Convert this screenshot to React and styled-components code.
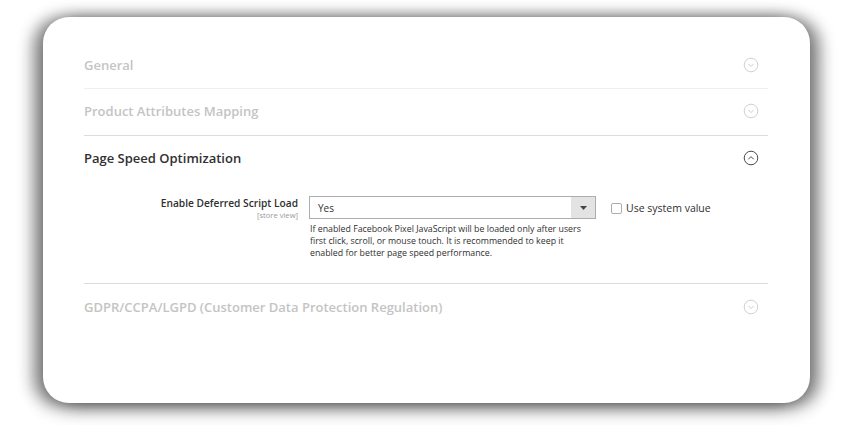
import React from "react";
import styled, { createGlobalStyle } from "styled-components";

const GlobalStyle = createGlobalStyle`
  html, body {
    margin: 0;
    padding: 0;
    background: #ffffff;
    font-family: "Open Sans", "Noto Sans", sans-serif;
  }
`;

const Page = styled.div`
  width: 853px;
  height: 425px;
  padding: 17px 43px 0 43px;
  box-sizing: border-box;
  overflow: hidden;
`;

const Card = styled.div`
  width: 767px;
  height: 386px;
  box-sizing: border-box;
  background: #ffffff;
  border-radius: 26px;
  padding: 25px 42px 0 41px;
  box-shadow: -10px 2px 16px rgba(0, 0, 0, 0.42), 10px 2px 16px rgba(0, 0, 0, 0.42),
    0 7px 22px rgba(0, 0, 0, 0.18), 0 -4px 18px rgba(0, 0, 0, 0.08);
`;

const Section = styled.div`
  border-top: 1px solid ${(p) => (p.$strong ? "#dcdcdc" : "#efefef")};
  ${(p) => p.$first && "border-top: none;"}
`;

const Header = styled.div`
  height: 46px;
  display: flex;
  align-items: center;
  justify-content: space-between;
  padding-right: 9px;
  padding-bottom: ${(p) => (p.$tight ? "2px" : "0")};
  box-sizing: border-box;
`;

const Title = styled.span`
  font-size: 13px;
  font-weight: 600;
  color: ${(p) => (p.$active ? "#303030" : "#c4c4c4")};
`;

const Body = styled.div`
  padding: 14px 0 24px 0;
`;

const FieldRow = styled.div`
  display: grid;
  grid-template-columns: 214px 287px auto;
  column-gap: 11px;
  align-items: start;
`;

const LabelCol = styled.div`
  text-align: right;
  padding-top: 1px;
`;

const Label = styled.div`
  font-size: 10.2px;
  font-weight: 600;
  color: #303030;
  line-height: 13px;
`;

const Scope = styled.div`
  font-size: 7.6px;
  color: #9a9a9a;
  line-height: 9px;
  margin-top: 1px;
`;

const Select = styled.div`
  height: 23px;
  box-sizing: border-box;
  border: 1px solid #adadad;
  display: flex;
  align-items: stretch;
`;

const SelectValue = styled.div`
  flex: 1;
  font-size: 10px;
  color: #303030;
  display: flex;
  align-items: center;
  padding-left: 8px;
`;

const SelectArrow = styled.div`
  width: 24px;
  background: #e3e3e3;
  display: flex;
  align-items: center;
  justify-content: center;
`;

const Note = styled.div`
  font-size: 8.8px;
  line-height: 12px;
  color: #303030;
  margin-top: 4px;
  padding-left: 1px;
  max-width: 284px;
`;

const SystemValue = styled.label`
  display: flex;
  align-items: center;
  gap: 4px;
  margin-left: 4px;
  margin-top: 5px;
  font-size: 10.5px;
  color: #303030;
`;

const Checkbox = styled.span`
  width: 11px;
  height: 11px;
  border: 1px solid #adadad;
  border-radius: 2px;
  background: #fff;
  box-sizing: border-box;
`;

const Chevron = ({ up, active }) => (
  <svg width="16" height="16" viewBox="0 0 16 16">
    <circle cx="8" cy="8" r="6.8" fill="none" stroke={active ? "#4a4a4a" : "#d0d0d0"} strokeWidth="1" />
    <path
      d={up ? "M5.3 9.3 L8 6.6 L10.7 9.3" : "M5.3 6.9 L8 9.6 L10.7 6.9"}
      fill="none"
      stroke={active ? "#4a4a4a" : "#d0d0d0"}
      strokeWidth="1"
    />
  </svg>
);

export default function App() {
  return (
    <>
      <GlobalStyle />
      <Page>
        <Card>
          <Section $first>
            <Header>
              <Title>General</Title>
              <Chevron />
            </Header>
          </Section>
          <Section>
            <Header $tight>
              <Title>Product Attributes Mapping</Title>
              <Chevron />
            </Header>
          </Section>
          <Section $strong>
            <Header $tight>
              <Title $active>Page Speed Optimization</Title>
              <Chevron up active />
            </Header>
            <Body>
              <FieldRow>
                <LabelCol>
                  <Label>Enable Deferred Script Load</Label>
                  <Scope>[store view]</Scope>
                </LabelCol>
                <div>
                  <Select>
                    <SelectValue>Yes</SelectValue>
                    <SelectArrow>
                      <svg width="7" height="4" viewBox="0 0 7 4">
                        <path d="M0 0 L7 0 L3.5 4 Z" fill="#444" />
                      </svg>
                    </SelectArrow>
                  </Select>
                  <Note>
                    If enabled Facebook Pixel JavaScript will be loaded only after users first click, scroll, or
                    mouse touch. It is recommended to keep it enabled for better page speed performance.
                  </Note>
                </div>
                <SystemValue>
                  <Checkbox />
                  Use system value
                </SystemValue>
              </FieldRow>
            </Body>
          </Section>
          <Section $strong>
            <Header>
              <Title>GDPR/CCPA/LGPD (Customer Data Protection Regulation)</Title>
              <Chevron />
            </Header>
          </Section>
        </Card>
      </Page>
    </>
  );
}
